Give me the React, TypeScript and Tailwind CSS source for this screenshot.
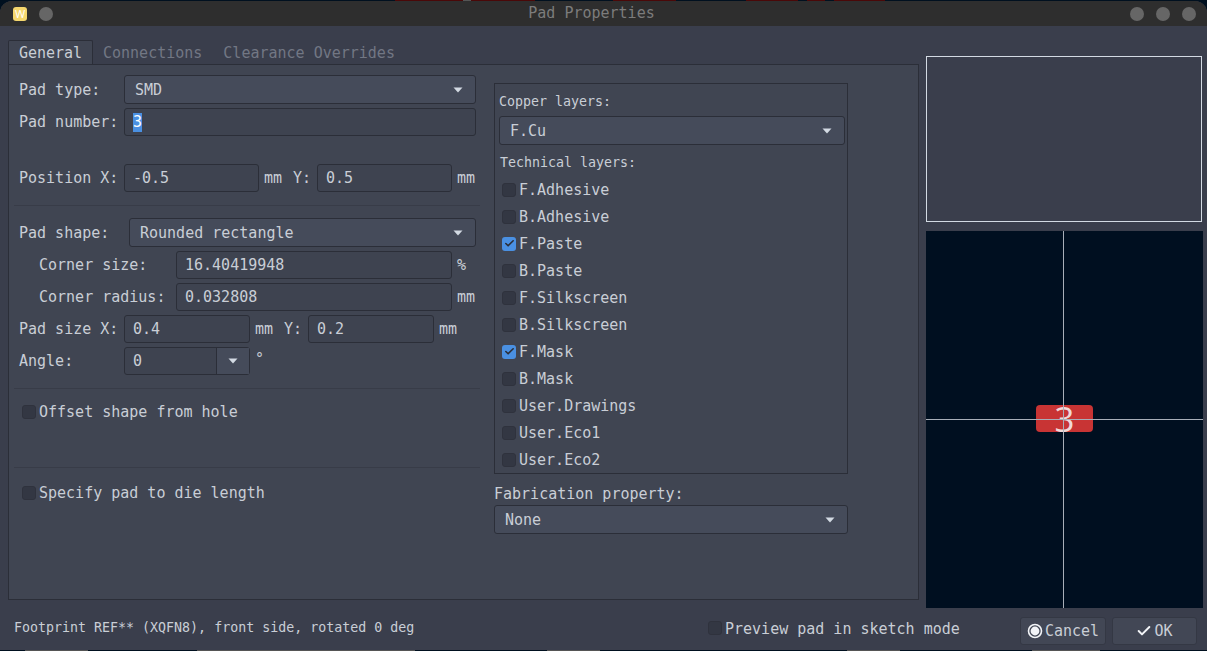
import { Check } from 'lucide-react';

const font = "font-['DejaVu_Sans_Mono','Liberation_Mono',monospace]";

function Caret() {
  return (
    <svg width="10" height="6" viewBox="0 0 10 6" className="shrink-0">
      <path d="M0.5 0.5h9L5 5.5z" fill="#d3dae3" />
    </svg>
  );
}

function Combo({ value, className }: { value: string; className: string }) {
  return (
    <div className={`flex h-[29px] items-center justify-between rounded-[3px] border border-[#2b2e38] bg-[#454b5a] pl-[10px] pr-[12px] ${className}`}>
      <span className="pt-[2px]">{value}</span>
      <Caret />
    </div>
  );
}

function Input({ value, className }: { value: string; className: string }) {
  return (
    <div className={`flex h-[28px] items-center rounded-[3px] border border-[#2b2e38] bg-[#3e4350] pl-[8px] ${className}`}>
      {value}
    </div>
  );
}

function CheckBox({ label, checked, className = '', labelClass = 'pt-[2px]' }: { label: string; checked?: boolean; className?: string; labelClass?: string }) {
  return (
    <div className={`flex items-center ${className}`}>
      <span className={`mr-[3px] flex h-[14px] w-[14px] shrink-0 items-center justify-center rounded-[3px] ${checked ? 'bg-[#4a90e2]' : 'border border-[#2f323d] bg-[#333743]'}`}>
        {checked && <Check size={11} strokeWidth={3.5} color="#2b2e38" />}
      </span>
      <span className={`whitespace-nowrap ${labelClass}`}>{label}</span>
    </div>
  );
}

const layers = [
  { name: 'F.Adhesive' },
  { name: 'B.Adhesive' },
  { name: 'F.Paste', checked: true },
  { name: 'B.Paste' },
  { name: 'F.Silkscreen' },
  { name: 'B.Silkscreen' },
  { name: 'F.Mask', checked: true },
  { name: 'B.Mask' },
  { name: 'User.Drawings' },
  { name: 'User.Eco1' },
  { name: 'User.Eco2' },
];

function Row({ children, className = '' }: { children: React.ReactNode; className?: string }) {
  return <div className={`flex items-center ${className}`}>{children}</div>;
}

function GeneralLeft() {
  return (
    <div className="ml-[5px] flex w-[466px] flex-col pt-[10px]">
      <Row className="pl-[5px]">
        <span className="w-[105px] pt-[2px]">Pad type:</span>
        <Combo value="SMD" className="w-[352px]" />
      </Row>
      <Row className="mt-[4px] pl-[5px]">
        <span className="w-[105px]">Pad number:</span>
        <div className="flex h-[28px] w-[352px] items-center rounded-[3px] border border-[#2b2e38] bg-[#3e4350] pl-[8px]">
          <span className="bg-[#4a90e2] leading-[19px] text-white">3</span>
        </div>
      </Row>
      <Row className="mt-[28px] pl-[5px]">
        <span className="w-[105px]">Position X:</span>
        <Input value="-0.5" className="w-[135px]" />
        <span className="ml-[5px] w-[29px]">mm</span>
        <span className="w-[24px]">Y:</span>
        <Input value="0.5" className="w-[135px]" />
        <span className="ml-[5px]">mm</span>
      </Row>
      <div className="mt-[13px] h-px bg-[#383c48]" />
      <Row className="mt-[12px] pl-[5px]">
        <span className="w-[110px] pt-[2px]">Pad shape:</span>
        <Combo value="Rounded rectangle" className="w-[347px]" />
      </Row>
      <Row className="mt-[4px] pl-[25px]">
        <span className="w-[137px]">Corner size:</span>
        <Input value="16.40419948" className="w-[276px]" />
        <span className="ml-[5px]">%</span>
      </Row>
      <Row className="mt-[4px] pl-[25px]">
        <span className="w-[137px]">Corner radius:</span>
        <Input value="0.032808" className="w-[276px]" />
        <span className="ml-[5px]">mm</span>
      </Row>
      <Row className="mt-[4px] pl-[5px]">
        <span className="w-[105px]">Pad size X:</span>
        <Input value="0.4" className="w-[126px]" />
        <span className="ml-[5px] w-[29px]">mm</span>
        <span className="w-[24px]">Y:</span>
        <Input value="0.2" className="w-[126px]" />
        <span className="ml-[5px]">mm</span>
      </Row>
      <Row className="mt-[4px] pl-[5px]">
        <span className="w-[105px]">Angle:</span>
        <div className="flex h-[28px] w-[126px] items-stretch rounded-[3px] border border-[#2b2e38] bg-[#3e4350]">
          <span className="flex flex-1 items-center pl-[8px]">0</span>
          <span className="flex w-[33px] items-center justify-center border-l border-[#2b2e38] bg-[#454b5a]">
            <Caret />
          </span>
        </div>
        <span className="mb-[4px] ml-[5px]">°</span>
      </Row>
      <div className="mt-[13px] h-px bg-[#383c48]" />
      <CheckBox label="Offset shape from hole" labelClass="pt-px" className="mt-[11px] h-[24px] pl-[8px]" />
      <div className="mt-[43px] h-px bg-[#383c48]" />
      <CheckBox label="Specify pad to die length" labelClass="pt-px" className="mt-[13px] h-[24px] pl-[8px]" />
    </div>
  );
}

function GeneralRight() {
  return (
    <div className="ml-[14px] flex w-[354px] flex-col pt-[18px]">
      <div className="flex h-[391px] flex-col border border-[#2b2e38] pl-[4px] pr-[2px] text-[13.3px]">
        <div className="mt-[10px] h-[16px] leading-[16px]">Copper layers:</div>
        <Combo value="F.Cu" className="mt-[6px] text-[15px]" />
        <div className="mt-[10px] h-[16px] pl-px leading-[16px]">Technical layers:</div>
        <div className="mt-[5px] flex flex-col pl-[3px] text-[15px]">
          {layers.map((l) => (
            <CheckBox key={l.name} label={l.name} checked={l.checked} className="h-[27px]" />
          ))}
        </div>
      </div>
      <div className="mt-[10px] h-[18px] leading-[20px]">Fabrication property:</div>
      <Combo value="None" className="mt-[3px]" />
    </div>
  );
}

function PadCanvas() {
  return (
    <div className="relative mt-[9px] h-[377px] w-[277px] overflow-hidden bg-[#000f20]">
      <div className="absolute left-[110px] top-[174px] flex h-[27px] w-[57px] items-center justify-center rounded-[4px] bg-[#c83434] font-['Open_Sans',sans-serif] text-[35px] leading-none text-[#f0d8d8]">
        3
      </div>
      <div className="absolute left-[137px] top-0 h-full w-px bg-[#a8aeb8]" />
      <div className="absolute left-0 top-[188px] h-px w-full bg-[#a8aeb8]" />
    </div>
  );
}

export default function App() {
  return (
    <div className={`h-[651px] w-[1207px] overflow-hidden bg-[#00101f] text-[15px] text-[#c9ced6] ${font}`}>
      {/* windows behind the dialog peeking out along the top edge */}
      <div className="flex h-px pl-[395px]">
        <div className="w-[68px] bg-[#4a0808]" />
        <div className="w-[8px] bg-[#555555]" />
        <div className="w-[64px] bg-[#4a0808]" />
        <div className="ml-[78px] w-[63px] bg-[#4a0808]" />
        <div className="ml-[70px] w-[52px] bg-[#4a0808]" />
        <div className="ml-[9px] w-[18px] bg-[#4a0808]" />
        <div className="ml-[9px] w-[51px] bg-[#4a0808]" />
      </div>
      <div className="flex h-[649px] flex-col overflow-hidden rounded-t-[12px] bg-[#3a3e4c]">
        <div className="flex h-[25px] shrink-0 items-center bg-[#2e2e2e] px-[11px]">
          <div className="ml-[2px] flex h-[14px] w-[14px] items-center justify-center rounded-[3px] bg-[#f5d76e] font-['Open_Sans',sans-serif] text-[11px] leading-none text-white">W</div>
          <div className="ml-[12px] h-[14px] w-[14px] rounded-full bg-[#666666]" />
          <div className="flex-1 text-center text-[#7c7c7c]">Pad Properties</div>
          <div className="flex gap-[12px]">
            <div className="h-[14px] w-[14px] rounded-full bg-[#666666]" />
            <div className="h-[14px] w-[14px] rounded-full bg-[#666666]" />
            <div className="h-[14px] w-[14px] rounded-full bg-[#666666]" />
          </div>
        </div>
        <div className="flex flex-1">
          <div className="ml-[8px] flex w-[911px] flex-col pt-[14px]">
            <div className="flex h-[24px]">
              <div className="flex w-[85px] items-center justify-center rounded-t-[2px] border border-b-0 border-[#2b2e38] bg-[#404552] pt-px">General</div>
              <div className="ml-[10px] flex items-center pt-[3px] text-[#727784]">Connections</div>
              <div className="ml-[21px] flex items-center pt-[3px] text-[#727784]">Clearance Overrides</div>
            </div>
            <div className="flex h-[536px] border border-[#2b2e38] bg-[#404552]">
              <GeneralLeft />
              <GeneralRight />
            </div>
            <div className="mt-[14px] flex h-[28px] items-center pl-[6px]">
              <span className="w-[694px] shrink-0 text-[13.3px]">Footprint REF** (XQFN8), front side, rotated 0 deg</span>
              <CheckBox label="Preview pad in sketch mode" />
            </div>
          </div>
          <div className="ml-[7px] flex w-[277px] flex-col pt-[30px]">
            <div className="h-[166px] w-[276px] border border-[#d3dae3]" />
            <PadCanvas />
            <div className="mt-[9px] flex justify-end gap-[6px] pr-[6px]">
              <div className="flex h-[28px] w-[86px] items-center justify-center rounded-[3px] border border-[#343844] bg-[#424755]">
                <svg width="16" height="16" viewBox="0 0 16 16" className="mr-[2px]">
                  <circle cx="8" cy="8" r="6.5" fill="none" stroke="#f2f4f7" strokeWidth="1.6" />
                  <circle cx="8" cy="8" r="4.4" fill="#f2f4f7" />
                </svg>
                Cancel
              </div>
              <div className="flex h-[28px] w-[85px] items-center justify-center rounded-[3px] border border-[#343844] bg-[#424755]">
                <Check size={16} strokeWidth={3} color="#f2f4f7" className="mr-[2px]" />
                OK
              </div>
            </div>
          </div>
        </div>
      </div>
      {/* same thing along the bottom edge */}
      <div className="flex h-px pl-[25px]">
        <div className="w-[63px] bg-[#555555]" />
        <div className="ml-[109px] w-[218px] bg-[#555555]" />
        <div className="ml-[132px] w-[53px] bg-[#555555]" />
        <div className="ml-[247px] w-[53px] bg-[#555555]" />
        <div className="ml-[132px] w-[68px] bg-[#555555]" />
      </div>
    </div>
  );
}
